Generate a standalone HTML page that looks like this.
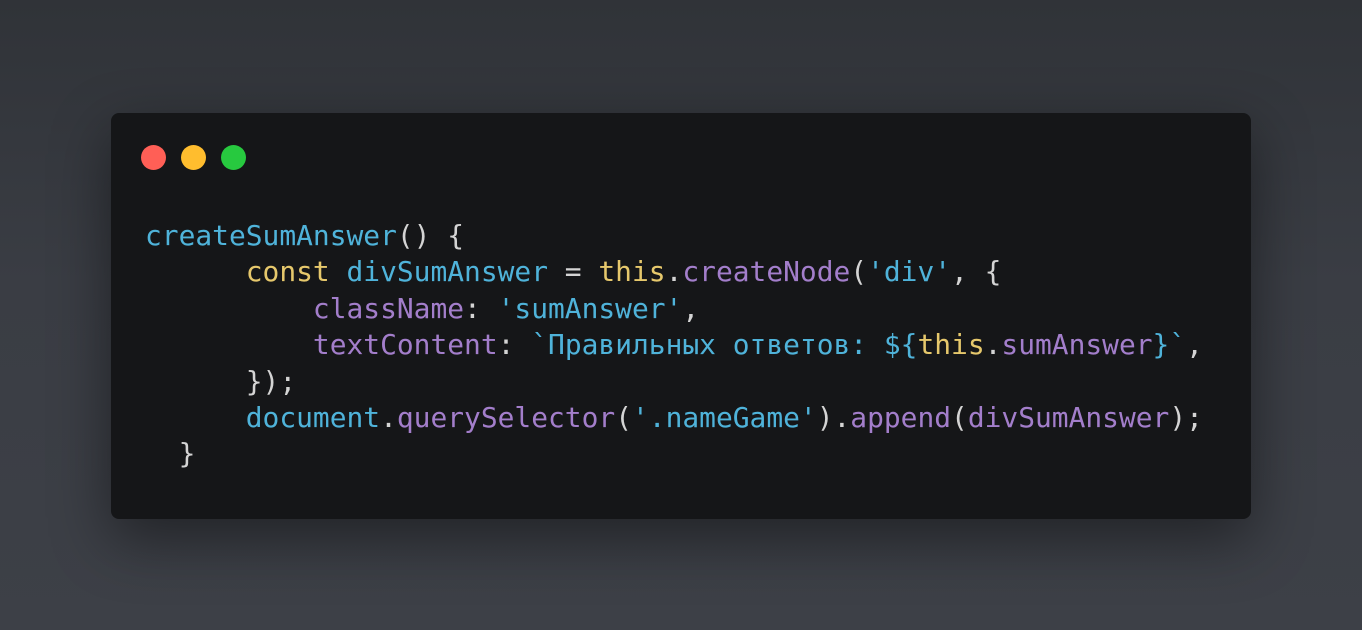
<!DOCTYPE html>
<html><head><meta charset="utf-8"><style>
html,body{margin:0;padding:0}
body{width:1362px;height:630px;overflow:hidden;background:linear-gradient(180deg,#303338 0%,#3a3d44 45%,#3d4047 100%);position:relative}
.card{position:absolute;left:111px;top:113px;width:1140px;height:406px;background:#151618;border-radius:8px;box-shadow:0 20px 60px rgba(0,0,0,.45)}
.dot{position:absolute;top:145px;width:25px;height:25px;border-radius:50%}
pre{position:absolute;left:145px;top:218px;margin:0;font-family:"DejaVu Sans Mono","Liberation Mono",monospace;font-size:27.9px;line-height:36.4px;color:#d4d4d4}
.b{color:#4fb3da}.y{color:#e6c86c}.p{color:#a37ecb}.w{color:#d4d4d4}
</style></head><body>
<div class="card"></div>
<div class="dot" style="left:141px;background:#ff5f56"></div>
<div class="dot" style="left:181px;background:#ffbd2e"></div>
<div class="dot" style="left:221px;background:#27c93f"></div>
<pre><span class="b">createSumAnswer</span>() {
      <span class="y">const</span> <span class="b">divSumAnswer</span> = <span class="y">this</span>.<span class="p">createNode</span>(<span class="b">'div'</span>, {
          <span class="p">className</span>: <span class="b">'sumAnswer'</span>,
          <span class="p">textContent</span>: <span class="b">`Правильных ответов: ${</span><span class="y">this</span>.<span class="p">sumAnswer</span><span class="b">}`</span>,
      });
      <span class="b">document</span>.<span class="p">querySelector</span>(<span class="b">'.nameGame'</span>).<span class="p">append</span>(<span class="p">divSumAnswer</span>);
  }</pre>
</body></html>
